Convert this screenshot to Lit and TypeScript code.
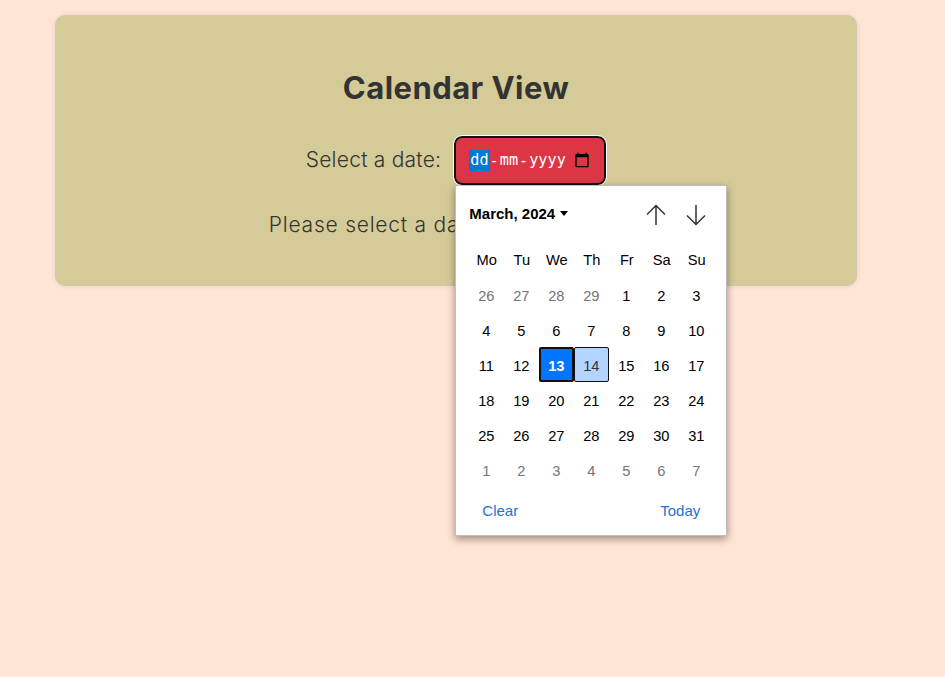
import { LitElement, html, css } from 'lit'
import { customElement } from 'lit/decorators.js'
import { classMap } from 'lit/directives/class-map.js'

const WEEKDAYS = ['Mo', 'Tu', 'We', 'Th', 'Fr', 'Sa', 'Su']

interface Day {
  label: number
  muted?: boolean
  selected?: boolean
  hover?: boolean
}

function marchDays(): Day[] {
  const days: Day[] = []
  for (const d of [26, 27, 28, 29]) days.push({ label: d, muted: true })
  for (let d = 1; d <= 31; d++) days.push({ label: d, selected: d === 13, hover: d === 14 })
  for (let d = 1; d <= 7; d++) days.push({ label: d, muted: true })
  return days
}

@customElement('app-root')
export class AppRoot extends LitElement {
  static styles = css`
    :host {
      display: block;
      min-height: 677px;
      background: #ffe5d4;
      font-family: 'Inter', 'Liberation Sans', sans-serif;
      overflow: hidden;
    }
    .card {
      width: 802px;
      height: 271px;
      box-sizing: border-box;
      margin: 15px 0 0 55px;
      padding: 51px 20px 0;
      display: flex;
      flex-direction: column;
      align-items: center;
      background: #d5cb98;
      border: 1px solid #cfc9b0;
      border-radius: 10px;
      box-shadow: 0 0 6px rgba(0, 0, 0, 0.08);
      color: #333;
    }
    h1 {
      margin: 0;
      font-size: 31px;
      line-height: 42px;
      font-weight: 700;
      letter-spacing: 0.45px;
      color: #333;
    }
    .row {
      margin-top: 27px;
      display: flex;
      align-items: center;
      gap: 13px;
    }
    label {
      font-size: 21px;
      font-weight: 300;
      line-height: 30px;
      padding-bottom: 2px;
      letter-spacing: 0.24px;
    }
    .field {
      position: relative;
      width: 152px;
      height: 49px;
      box-sizing: border-box;
      display: flex;
      align-items: center;
      padding-left: 13px;
      background: #dc3545;
      border: 2px solid #111;
      border-radius: 8px;
      outline: 1px solid #fff;
      color: #fff;
      font-family: 'DejaVu Sans Mono', monospace;
      font-size: 15.2px;
    }
    .seg {
      padding: 1px;
      line-height: 19px;
    }
    .seg.on {
      background: #0078d7;
    }
    .picker-icon {
      margin: 0 0 1px 7px;
      flex: none;
    }
    .status {
      margin: 25px 0 0;
      font-size: 21px;
      font-weight: 300;
      line-height: 30px;
      letter-spacing: 0.77px;
    }
    .popup {
      position: absolute;
      top: 47px;
      left: -1px;
      z-index: 5;
      width: 272px;
      height: 351px;
      box-sizing: border-box;
      padding: 8px 12px 0 13px;
      background: #fff;
      border: 1px solid #bfbfbf;
      box-shadow: 0 3px 8px rgba(0, 0, 0, 0.4);
      color: #000;
      font-family: 'Liberation Sans', Arial, sans-serif;
      font-size: 14.667px;
      letter-spacing: 0;
    }
    .head {
      height: 40px;
      display: flex;
      align-items: center;
    }
    .month {
      font-size: 15px;
      font-weight: 700;
      display: flex;
      align-items: center;
      gap: 5px;
      padding-bottom: 2px;
    }
    .caret {
      width: 0;
      height: 0;
      border-style: solid;
      border-color: #000 transparent transparent;
      border-width: 5px 4.5px 0;
    }
    .arrows {
      margin-left: auto;
      display: flex;
      gap: 16px;
      margin-right: 6px;
    }
    .grid {
      margin-top: 8px;
      display: grid;
      grid-template-columns: repeat(7, 35px);
      grid-auto-rows: 35px;
    }
    .cell {
      display: flex;
      align-items: center;
      justify-content: center;
      box-sizing: border-box;
    }
    .day {
      padding: 2px 1px 0 0;
    }
    .muted {
      color: #757575;
    }
    .selected {
      background: #0075ff;
      color: #fff;
      font-weight: 700;
      border: 2px solid #101010;
      border-radius: 2px;
    }
    .hover {
      background: #b3d4ff;
      color: #333;
      border: 1px solid #101010;
      border-radius: 2px;
    }
    .foot {
      margin-top: 8px;
      height: 30px;
      display: flex;
      align-items: center;
      justify-content: space-between;
      padding: 0 14px 0 13px;
      font-size: 15px;
      color: #1a73d8;
    }
  `

  render() {
    return html`
      <div class="card">
        <h1>Calendar View</h1>
        <div class="row">
          <label>Select a date:</label>
          <div class="field">
            <span class="seg on">dd</span><span>-</span><span class="seg">mm</span><span>-</span
            ><span class="seg">yyyy</span>
            <svg class="picker-icon" width="16" height="16" viewBox="0 0 24 24" fill="#000">
              <path
                d="M20 3h-1V1h-2v2H7V1H5v2H4c-1.1 0-2 .9-2 2v16c0 1.1.9 2 2 2h16c1.1 0 2-.9 2-2V5c0-1.1-.9-2-2-2zm0 18H4V8h16v13z"
              />
            </svg>
            ${this.renderPopup()}
          </div>
        </div>
        <p class="status">Please select a date to view details.</p>
      </div>
    `
  }

  renderPopup() {
    return html`
      <div class="popup">
        <div class="head">
          <span class="month">March, 2024 <i class="caret"></i></span>
          <span class="arrows">
            <svg width="24" height="24" viewBox="0 0 24 24" fill="none" stroke="#333" stroke-width="1.5">
              <path d="M12 23V3.500M3 12.500l9-9 9 9" />
            </svg>
            <svg width="24" height="24" viewBox="0 0 24 24" fill="none" stroke="#333" stroke-width="1.5">
              <path d="M12 3v19.500M3 13.500l9 9 9-9" />
            </svg>
          </span>
        </div>
        <div class="grid">
          ${WEEKDAYS.map((d) => html`<div class="cell">${d}</div>`)}
          ${marchDays().map(
            (d) => html`<div
              class=${classMap({ cell: true, day: true, muted: !!d.muted, selected: !!d.selected, hover: !!d.hover })}
            >
              ${d.label}
            </div>`,
          )}
        </div>
        <div class="foot"><span>Clear</span><span>Today</span></div>
      </div>
    `
  }
}
